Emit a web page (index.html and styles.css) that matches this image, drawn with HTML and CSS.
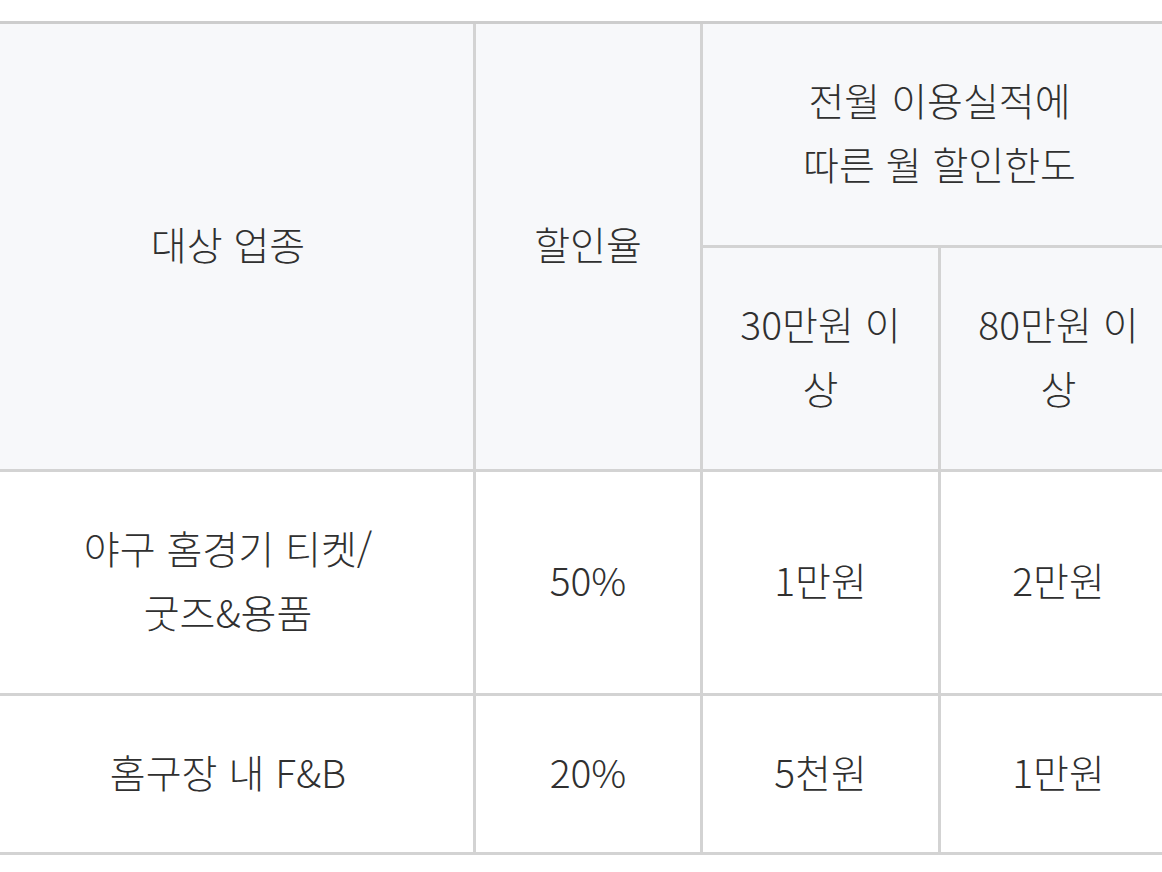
FILE: index.html
```html
<!DOCTYPE html>
<html lang="ko">
<head>
<meta charset="utf-8">
<link rel="stylesheet" href="styles.css">
</head>
<body>
<div class="frame">
<table class="benefit">
  <colgroup>
    <col class="c1"><col class="c2"><col class="c3"><col class="c4">
  </colgroup>
  <thead>
    <tr>
      <th rowspan="2">대상 업종</th>
      <th rowspan="2">할인율</th>
      <th colspan="2" class="last">전월 이용실적에<br>따른 월 할인한도</th>
    </tr>
    <tr>
      <th>30만원 이상</th>
      <th class="last">80만원 이상</th>
    </tr>
  </thead>
  <tbody>
    <tr>
      <td>야구 홈경기 티켓/<br>굿즈&amp;용품</td>
      <td>50%</td>
      <td>1만원</td>
      <td class="last">2만원</td>
    </tr>
    <tr class="short">
      <td>홈구장 내 F&amp;B</td>
      <td>20%</td>
      <td>5천원</td>
      <td class="last">1만원</td>
    </tr>
  </tbody>
</table>
</div>
</body>
</html>
```

FILE: styles.css
```css
html, body {
  margin: 0;
  padding: 0;
  background: #ffffff;
  overflow: hidden;
}

.frame {
  width: 1220px;
  margin-left: -17px;
  padding-top: 21px;
}

.benefit {
  table-layout: fixed;
  border-collapse: separate;
  border-spacing: 0;
  width: 1193px;
  border-top: 3px solid #cdcdcd;
  font-family: "Noto Sans CJK KR", "Noto Sans", sans-serif;
  font-size: 39px;
  line-height: 64px;
  color: #303030;
}

.c1 { width: 493px; }
.c2 { width: 227px; }
.c3 { width: 238px; }
.c4 { width: 235px; }

.benefit th,
.benefit td {
  box-sizing: border-box;
  padding: 43px 24px 50px;
  text-align: center;
  vertical-align: middle;
  font-weight: 300;
  border-right: 3px solid #d3d3d3;
  border-bottom: 3px solid #d3d3d3;
}

.benefit th {
  background: #f7f8fa;
}

.benefit td {
  background: #ffffff;
}

.benefit .last {
  border-right: none;
}

.benefit tr.short td {
  padding-top: 43px;
  padding-bottom: 49px;
}
```
